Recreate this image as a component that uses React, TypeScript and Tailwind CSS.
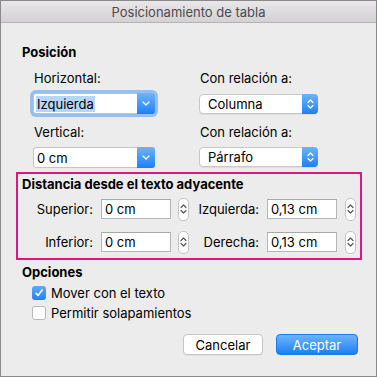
import React from "react";

function ChevronDown() {
  return (
    <svg width="8" height="5" viewBox="0 0 8 5">
      <path d="M1 1l3 3 3-3" fill="none" stroke="white" strokeWidth="1.3" strokeLinecap="round" strokeLinejoin="round" />
    </svg>
  );
}

function UpDown({ color }: { color: string }) {
  return (
    <svg width="7" height="12" viewBox="0 0 7 12">
      <path
        d="M1 4.5l2.5-2.5L6 4.5M1 7.5l2.5 2.5L6 7.5"
        fill="none"
        stroke={color}
        strokeWidth="1.2"
        strokeLinecap="round"
        strokeLinejoin="round"
      />
    </svg>
  );
}

function PullDown({ text, focus }: { text: string; focus?: boolean }) {
  return (
    <div
      className={
        focus
          ? "flex h-[21px] w-[122px] rounded-[3px] bg-white border border-[#a9c6ee] shadow-[0_0_0_3px_#94bff0]"
          : "flex h-[21px] w-[122px] rounded-[3px] bg-white border border-[#c4c4c4]"
      }
    >
      <div className="flex-1 flex items-center pl-[2px] text-[13px] text-black">
        <span className={focus ? "bg-[#b3d7ff] px-[1px] leading-[16px]" : "px-[1px] leading-[16px]"}>{text}</span>
      </div>
      <div className="w-[18px] -my-px -mr-px rounded-r-[3px] bg-linear-to-b from-[#6cb4fb] to-[#1a7ff8] flex items-center justify-center">
        <ChevronDown />
      </div>
    </div>
  );
}

function PopUp({ text }: { text: string }) {
  return (
    <div className="flex h-[20px] w-[119px] rounded-[4px] bg-white border border-[#c8c8c8] shadow-[0_1px_0_rgba(0,0,0,0.06)]">
      <div className="flex-1 flex items-center pl-[8px] text-[13px] text-black">{text}</div>
      <div className="w-[16px] -my-px -mr-px rounded-r-[4px] bg-linear-to-b from-[#6cb4fb] to-[#1a7ff8] flex items-center justify-center">
        <UpDown color="white" />
      </div>
    </div>
  );
}

function Stepper() {
  return (
    <div className="w-[11px] h-[23px] rounded-[5px] bg-white border border-[#c4c4c4] flex items-center justify-center">
      <UpDown color="#555" />
    </div>
  );
}

function Field({ value }: { value: string }) {
  return (
    <div className="w-[70px] h-[20px] bg-white border border-[#b5b5b5] border-t-[#a8a8a8] flex items-center pl-[3px] text-[13px] text-black">
      {value}
    </div>
  );
}

function DistRow({ l1, v1, l2, v2 }: { l1: string; v1: string; l2: string; v2: string }) {
  return (
    <div className="flex items-center h-[24px]">
      <div className="w-[71px] text-right text-[13px] text-black">{l1}</div>
      <div className="ml-[8px]">
        <Field value={v1} />
      </div>
      <div className="ml-[7px]">
        <Stepper />
      </div>
      <div className="w-[70px] text-right text-[13px] text-black">{l2}</div>
      <div className="ml-[8px]">
        <Field value={v2} />
      </div>
      <div className="ml-[8px]">
        <Stepper />
      </div>
    </div>
  );
}

export default function App() {
  return (
    <div className="w-[377px] h-[377px] bg-[#ececec] border border-[#8a8a8a] flex flex-col [font-family:Inter,'Liberation_Sans',sans-serif] leading-[16px] overflow-hidden">
      <div className="h-[22px] shrink-0 border-b border-[#b4b4b4] bg-linear-to-b from-[#e9e7e9] to-[#d3d1d3] flex items-center justify-center text-[13px] text-[#4b4b4b]">
        Posicionamiento de tabla
      </div>

      <div className="flex flex-col pt-[21px]">
        <div className="pl-[21px] text-[13px] font-bold text-black">Posición</div>

        <div className="pl-[32px] mt-[10px] grid grid-cols-[122px_119px] gap-x-[44px]">
          <div className="pl-[1px] text-[13px] text-black">Horizontal:</div>
          <div className="pl-[1px] text-[13px] text-black">Con relación a:</div>
          <div className="mt-[7px]">
            <PullDown text="Izquierda" focus />
          </div>
          <div className="mt-[7px] pt-[1px]">
            <PopUp text="Columna" />
          </div>
          <div className="mt-[10px] pl-[1px] text-[13px] text-black">Vertical:</div>
          <div className="mt-[10px] pl-[1px] text-[13px] text-black">Con relación a:</div>
          <div className="mt-[7px]">
            <PullDown text="0 cm" />
          </div>
          <div className="mt-[7px]">
            <PopUp text="Párrafo" />
          </div>
        </div>

        <div className="ml-[15px] mt-[4px] w-[346px] h-[88px] border-2 border-[#e0177f] flex flex-col pt-[2px] pl-[4px]">
          <div className="text-[13px] font-bold text-black">Distancia desde el texto adyacente</div>
          <div className="mt-[5px] flex flex-col gap-[9px]">
            <DistRow l1="Superior:" v1="0 cm" l2="Izquierda:" v2="0,13 cm" />
            <DistRow l1="Inferior:" v1="0 cm" l2="Derecha:" v2="0,13 cm" />
          </div>
        </div>

        <div className="pl-[21px] mt-[4px] text-[13px] font-bold text-black">Opciones</div>

        <div className="pl-[31px] mt-[6px] flex flex-col gap-[6px]">
          <div className="flex items-center h-[14px]">
            <div className="w-[14px] h-[14px] rounded-[3px] bg-linear-to-b from-[#5fa9fb] to-[#1c81f7] flex items-center justify-center">
              <svg width="10" height="10" viewBox="0 0 10 10">
                <path d="M2 5.3l2 2.2L8.2 2" fill="none" stroke="white" strokeWidth="1.6" strokeLinecap="round" strokeLinejoin="round" />
              </svg>
            </div>
            <span className="ml-[5px] text-[13px] text-black">Mover con el texto</span>
          </div>
          <div className="flex items-center h-[14px]">
            <div className="w-[14px] h-[14px] rounded-[3px] bg-white border border-[#b8b8b8]" />
            <span className="ml-[5px] text-[13px] text-black">Permitir solapamientos</span>
          </div>
        </div>

        <div className="mt-[14px] pr-[18px] flex justify-end gap-[13px]">
          <div className="w-[80px] h-[21px] rounded-[4px] bg-white border border-[#c6c6c6] shadow-[0_1px_0_rgba(0,0,0,0.05)] flex items-center justify-center text-[13px] text-black">
            Cancelar
          </div>
          <div className="w-[82px] h-[21px] rounded-[4px] bg-linear-to-b from-[#6cb3fa] to-[#127ff6] border border-[#1979e8] flex items-center justify-center text-[13px] text-white">
            Aceptar
          </div>
        </div>
      </div>
    </div>
  );
}
